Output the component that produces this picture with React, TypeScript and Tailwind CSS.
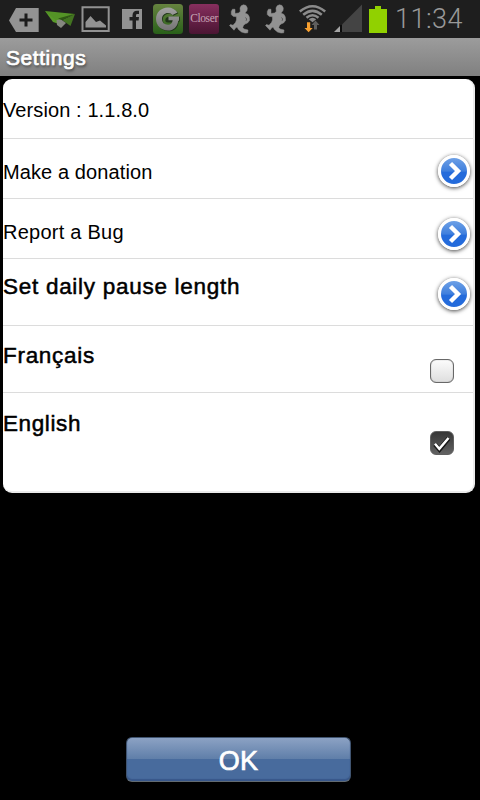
import { useState } from "react";

type Language = "fr" | "en";

function TagIcon() {
  return (
    <svg className="h-[38px] w-[32px]" viewBox="8 0 32 38">
      <path d="M16 8h22.700v24H16L9 20.500z" fill="#939393" />
      <path d="M26 13.500v13M19.500 20h13" stroke="#1d1d1d" strokeWidth="3" />
    </svg>
  );
}

function PlaneIcon() {
  return (
    <svg className="h-[38px] w-[32px]" viewBox="44 0 32 38">
      <path d="M45 11l12 7 .5 5.500-4.500-1.500z" fill="#599a29" />
      <path d="M45 11l30 3-15 6-4 .5z" fill="#549326" />
      <path d="M62 20l13-6-4.500 12z" fill="#437421" />
      <path d="M56.500 20l4.500-.5 5 3.500-5 5-4-3z" fill="#85887f" />
      <path d="M58 18.500L74 14l-12 6z" fill="#2f5914" />
    </svg>
  );
}

function PictureIcon() {
  return (
    <svg className="h-[38px] w-[34px]" viewBox="79 0 34 38">
      <path d="M82.500 7.200h26.200v23.800H82.500z" fill="none" stroke="#929292" strokeWidth="2" />
      <path d="M85.500 27.500V22l5-6 5.500 6 4-1.500 6 5v2z" fill="#929292" />
    </svg>
  );
}

function FacebookIcon() {
  return (
    <svg className="h-[38px] w-[30px]" viewBox="117 0 30 38">
      <path d="M122 9h20v20h-20z" fill="#929292" />
      <path d="M132.500 29v-8.500h-3V17h3v-1.500c0-3.300 1.500-4.800 4.500-4.800h2V14h-1.500c-1.200 0-1.500.6-1.500 1.800V17h3l-.4 3.500h-2.600V29z" fill="#202020" />
    </svg>
  );
}

function GIcon() {
  return (
    <svg className="h-[38px] w-[32px]" viewBox="152 0 32 38">
      <defs>
        <linearGradient id="gBack" x1="0" y1="0" x2="0" y2="1">
          <stop offset="0" stopColor="#66833f" />
          <stop offset="1" stopColor="#286019" />
        </linearGradient>
        <linearGradient id="gMetal" x1="0" y1="0" x2="0" y2="1">
          <stop offset="0" stopColor="#a2a2a2" />
          <stop offset="1" stopColor="#747474" />
        </linearGradient>
      </defs>
      <rect x="153" y="4" width="30" height="30" rx="3.500" fill="url(#gBack)" />
      <path
        d="M177.500 12.500C175.500 9.500 172 7.500 168 7.500c-7 0-12 5-12 11.500s5 11.500 12 11.500c5.500 0 9.500-3.500 9.800-9.800H179V16h-10.500c-2.500 0-4 1.300-4 3.500 0 1.500 1 2.200 2.500 2.200h5.200c-.8 2-2.200 3-4.200 3-3.500 0-6-2.200-6-5.700s2.500-6 6-6c2 0 3.500.7 4.500 2z"
        transform="translate(.8 .8)"
        fill="#20351a"
      />
      <path
        d="M177.500 12.500C175.500 9.500 172 7.500 168 7.500c-7 0-12 5-12 11.500s5 11.500 12 11.500c5.500 0 9.500-3.500 10.200-9.800H179V16.500h-10.500v3.700h4.200c-.5 3-2.200 4.500-4.700 4.500-3.500 0-6-2.200-6-5.700s2.500-6 6-6c2 0 3.500.7 4.500 2z"
        fill="url(#gMetal)"
      />
    </svg>
  );
}

function RunnerIcon() {
  return (
    <svg className="h-[38px] w-[36px]" viewBox="222 0 36 38">
      <path
        d="M243.500 4.800L246 5.500 247.300 8 247 10.500 245 13 248 14.500 249.300 17 249.500 20.500 247.500 23 245 24 243.500 25.500 242.700 27.500 244 29 248 30 247.700 32.800 245 33 241.500 32 238.500 29.500 237 27 235.500 28 234 30.200 229.500 25.500 230.500 24.500 233 25.300 235.500 22.500 236.500 20 236.500 16.800 233 16.300 231.300 14.500 231.300 11.500 232.500 9.200 235 9.300 235 13.500 238.500 13 240.300 11.500 240 8 241.200 5.800z"
        fill="#929292"
        stroke="#929292"
        strokeWidth=".5"
        strokeLinejoin="round"
      />
      <path d="M245.500 17.500l1.200 1.500-.6 1.800" fill="none" stroke="#4a4a4a" strokeWidth=".8" />
    </svg>
  );
}

function WifiIcon() {
  return (
    <svg className="h-[38px] w-[30px]" viewBox="297 0 30 38">
      <g fill="none" stroke="#8b8b8b" strokeWidth="2.500">
        <path d="M299.800 11.500Q312.500 1 325.200 11.500" />
        <path d="M303.200 14.800Q312.500 7 321.800 14.800" />
        <path d="M306.500 17.800Q312.500 12.800 318.500 17.800" />
      </g>
      <path d="M308.800 19.200q3.700-3 7.400 0l-3.700 3z" fill="#8b8b8b" />
      <path d="M315.500 20.500l4 4.500H317v4.500h-3V25h-2.500z" fill="#5f5f5f" />
      <path d="M307 22.300h3.200V28h2.500l-4.100 4.300-4.100-4.300h2.500z" fill="#f8a030" />
    </svg>
  );
}

function SignalIcon() {
  return (
    <svg className="h-[38px] w-[30px]" viewBox="333 0 30 38">
      <path d="M362 4.500V32h-20V24.500z" fill="#444" />
      <path d="M340 26v6h-6z" fill="#a5a5a5" />
      <path d="M341 25v7" stroke="#050505" strokeWidth="1.300" />
    </svg>
  );
}

function StatusBar() {
  return (
    <div className="flex h-[38px] items-center bg-[#1e1e1e] pl-2">
      <TagIcon />
      <div className="ml-1 flex">
        <PlaneIcon />
      </div>
      <div className="ml-[3px] flex">
        <PictureIcon />
      </div>
      <div className="ml-1 flex">
        <FacebookIcon />
      </div>
      <div className="ml-[5px] flex">
        <GIcon />
      </div>
      <div className="ml-[5px] flex h-[30px] w-[30px] items-center justify-center rounded-[3px] bg-linear-to-b from-[#872f5e] to-[#4b1533] font-['Liberation_Serif',serif] text-[11.5px] tracking-[-0.4px] text-[#c5a2b4]">
        Closer
      </div>
      <div className="ml-[3px] flex">
        <RunnerIcon />
        <RunnerIcon />
      </div>
      <div className="ml-[3px] flex">
        <WifiIcon />
      </div>
      <div className="ml-1.5 flex">
        <SignalIcon />
      </div>
      <div className="ml-[6px] flex h-[27px] w-[18px] flex-col items-center">
        <div className="h-[3px] w-[6px] bg-[#91d100]" />
        <div className="h-6 w-full bg-[#91d100]" />
      </div>
      <span className="ml-[8px] font-['Roboto',sans-serif] text-[27px] leading-[38px] font-light tracking-[0.5px] whitespace-nowrap text-[#999]">
        11:34
      </span>
    </div>
  );
}

function ArrowButton({ label }: { label: string }) {
  return (
    <button
      aria-label={label}
      className="flex size-8 items-center justify-center rounded-full border-[3px] border-white bg-linear-to-b from-[#6da0e6] from-0% via-[#3f7fdd] via-50% to-[#246bdb] to-55% shadow-[0_1px_4px_rgba(0,0,0,0.75)]"
    >
      <svg className="size-[26px] shrink-0" viewBox="0 0 26 26">
        <path d="M9.500 5.500l7.500 7.500-7.500 7.500" fill="none" stroke="#fff" strokeWidth="4.400" />
      </svg>
    </button>
  );
}

function Checkbox({ checked, label, onChange }: { checked: boolean; label: string; onChange: () => void }) {
  return (
    <button
      role="checkbox"
      aria-checked={checked}
      aria-label={label}
      onClick={onChange}
      className={
        checked
          ? "flex size-6 items-center justify-center rounded-[6px] border border-[#606060] bg-linear-to-b from-[#373737] to-[#626262]"
          : "flex size-6 items-center justify-center rounded-[6px] border border-[#686868] bg-linear-to-b from-[#fcfcfc] to-[#dedede] shadow-[inset_0_0_1px_#777]"
      }
    >
      {checked && (
        <svg className="size-[22px] shrink-0" viewBox="0 0 22 22" fill="none">
          <path d="M4 12.500l4.500 5 9-11" stroke="#181818" strokeWidth="4.500" />
          <path d="M4 11.800l4.300 5L17.500 6" stroke="#fff" strokeWidth="2.500" />
        </svg>
      )}
    </button>
  );
}

export default function App() {
  const [language, setLanguage] = useState<Language>("en");

  return (
    <div className="flex h-[800px] w-[480px] flex-col overflow-hidden bg-black font-['Liberation_Sans',Arial,sans-serif] text-black">
      <StatusBar />

      <header className="h-[38px] bg-linear-to-b from-[#9c9c9c] to-[#808080] pl-[6px] text-[21px] leading-[40px] text-white [-webkit-text-stroke:0.7px_white] [text-shadow:1px_2px_3px_rgba(0,0,0,0.6)]">
        <h1 className="tracking-[0.55px]">Settings</h1>
      </header>

      <main className="mt-[3px] ml-[3px] flex h-[414px] w-[472px] flex-col overflow-hidden rounded-[9px] border-r-2 border-b-2 border-[#ebebeb] bg-white text-[20px] leading-6 tracking-[0.1px]">
        <div className="h-[60px] border-b border-[#dcdcdc] pt-[19px]">Version : 1.1.8.0</div>

        <div className="flex h-[60px] justify-between border-b border-[#dcdcdc] pr-[3px]">
          <span className="pt-[21px]">Make a donation</span>
          <div className="pt-4">
            <ArrowButton label="Make a donation" />
          </div>
        </div>

        <div className="flex h-[60px] justify-between border-b border-[#dcdcdc] pr-[3px]">
          <span className="pt-[21px] tracking-[0.25px]">Report a Bug</span>
          <div className="pt-[19px]">
            <ArrowButton label="Report a Bug" />
          </div>
        </div>

        <div className="flex h-[67px] justify-between border-b border-[#dcdcdc] pr-[3px] text-[22.5px] leading-7 tracking-[0.72px] [-webkit-text-stroke:0.5px_black]">
          <span className="pt-[14px]">Set daily pause length</span>
          <div className="pt-[19px]">
            <ArrowButton label="Set daily pause length" />
          </div>
        </div>

        <div className="flex h-[67px] justify-between border-b border-[#dcdcdc] pr-[19px] text-[22.5px] leading-7 tracking-[0.7px] [-webkit-text-stroke:0.5px_black]">
          <span className="pt-[16px]">Français</span>
          <div className="pt-[33px]">
            <Checkbox label="Français" checked={language === "fr"} onChange={() => setLanguage("fr")} />
          </div>
        </div>

        <div className="flex flex-1 justify-between pr-[19px] text-[22.5px] leading-7 tracking-[0.6px] [-webkit-text-stroke:0.5px_black]">
          <span className="pt-[17px]">English</span>
          <div className="pt-[38px]">
            <Checkbox label="English" checked={language === "en"} onChange={() => setLanguage("en")} />
          </div>
        </div>
      </main>

      <button className="mt-[244px] ml-[126px] h-[45px] w-[225px] rounded-[6px] border border-[#405470] border-b-[#626b72] bg-linear-to-b from-[#8ca2c4] from-0% via-[#607fa9] via-48% to-[#486b9d] to-50% pt-[2px] text-[27px] leading-[40px] tracking-[0.3px] text-white shadow-[inset_0_-2px_1px_#38578a] [-webkit-text-stroke:0.7px_white]">
        OK
      </button>
    </div>
  );
}
